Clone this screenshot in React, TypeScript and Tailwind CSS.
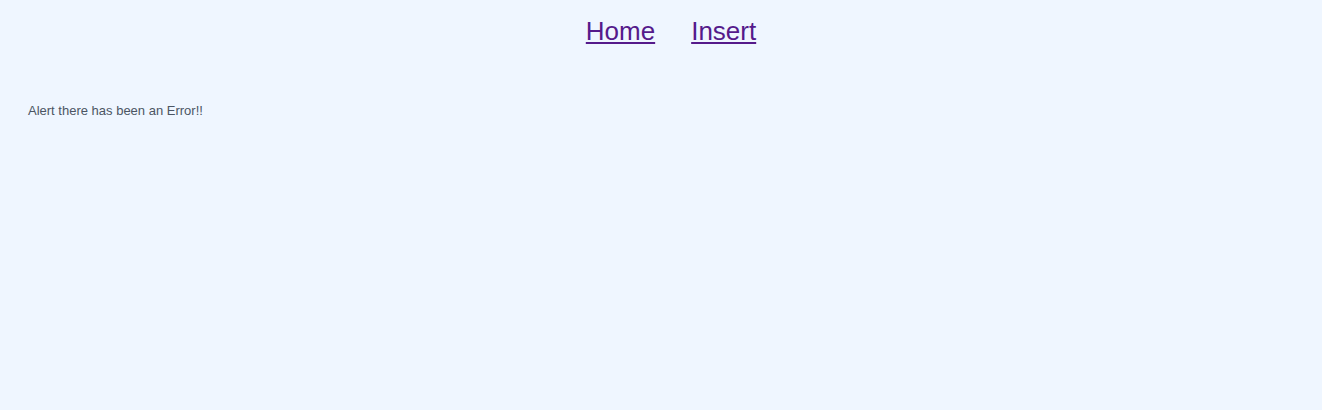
import React from "react";

export default function App() {
  return (
    <div className="min-h-[410px] bg-[#eff6ff] font-['Liberation_Sans',Arial,sans-serif]">
      {/* Nav */}
      <nav className="flex justify-center gap-9 pt-[14px] pl-5">
        <a href="#" className="text-[26px] leading-[34px] text-[#551a8b] underline">
          Home
        </a>
        <a href="#" className="text-[26px] leading-[34px] text-[#551a8b] underline">
          Insert
        </a>
      </nav>

      <main className="px-7 pt-[53px]">
        <p className="text-[13px] text-[#4b5563]">Alert there has been an Error!!</p>
      </main>
    </div>
  );
}
